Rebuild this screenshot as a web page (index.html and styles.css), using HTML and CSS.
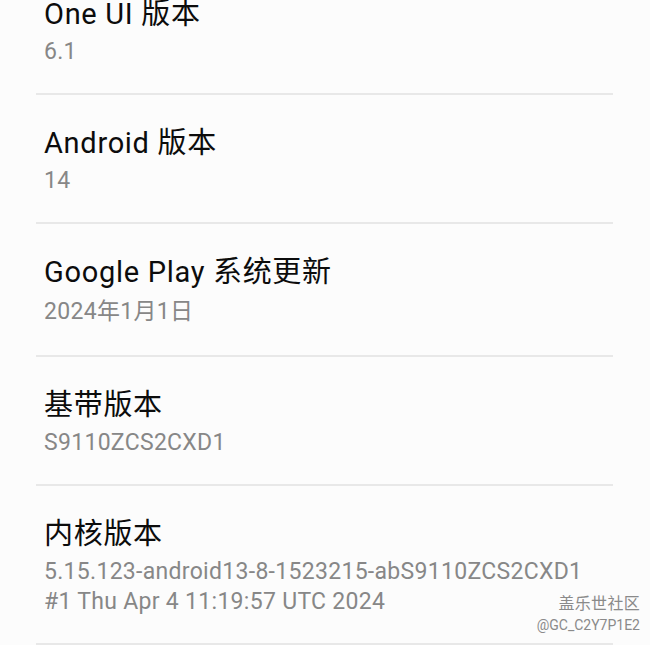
FILE: index.html
```html
<!DOCTYPE html>
<html lang="zh-CN">
<head>
<meta charset="utf-8">
<title>软件信息</title>
<link rel="stylesheet" href="styles.css">
</head>
<body>
<main class="card">
  <ul class="list">
    <li class="row">
      <div class="title">One UI 版本</div>
      <div class="sub">6.1</div>
    </li>
    <li class="row">
      <div class="title">Android 版本</div>
      <div class="sub">14</div>
    </li>
    <li class="row">
      <div class="title">Google Play 系统更新</div>
      <div class="sub sub-cjk">2024年1月1日</div>
    </li>
    <li class="row">
      <div class="title">基带版本</div>
      <div class="sub">S9110ZCS2CXD1</div>
    </li>
    <li class="row">
      <div class="title">内核版本</div>
      <div class="sub">5.15.123-android13-8-1523215-abS9110ZCS2CXD1</div>
      <div class="sub sub-next">#1 Thu Apr 4 11:19:57 UTC 2024</div>
    </li>
  </ul>
</main>
<div class="watermark">
  <div class="wm-name">盖乐世社区</div>
  <div class="wm-id">@GC_C2Y7P1E2</div>
</div>
</body>
</html>
```
FILE: styles.css
```css
html, body {
  margin: 0;
  padding: 0;
}
body {
  background: #e7eded;
  font-family: "Roboto", "Noto Sans CJK SC", sans-serif;
  height: 645px;
  overflow: hidden;
  position: relative;
}
.card {
  margin-top: 4px;
  background: #fcfcfc;
  border-radius: 36px 36px 0 0;
  min-height: 641px;
}
.list {
  list-style: none;
  margin: -38px 37px 0 36px;
  padding: 0;
}
.row {
  padding: 30px 8px 26px;
  border-bottom: 2px solid #e8e8e8;
}
.title {
  font-size: 29px;
  line-height: 36px;
  color: #0c0c0c;
  letter-spacing: 0.7px;
}
.sub {
  margin-top: 5px;
  font-size: 23px;
  line-height: 30px;
  color: #878787;
  letter-spacing: 0.3px;
}
.sub-cjk {
  line-height: 34px;
}
.sub-next {
  margin-top: 0;
}
.watermark {
  position: absolute;
  right: 10px;
  bottom: 10px;
  text-align: right;
  color: #8a8a8a;
}
.wm-name {
  font-size: 16px;
  line-height: 22px;
  letter-spacing: 0.3px;
}
.wm-id {
  font-size: 14px;
  line-height: 20px;
}
```
